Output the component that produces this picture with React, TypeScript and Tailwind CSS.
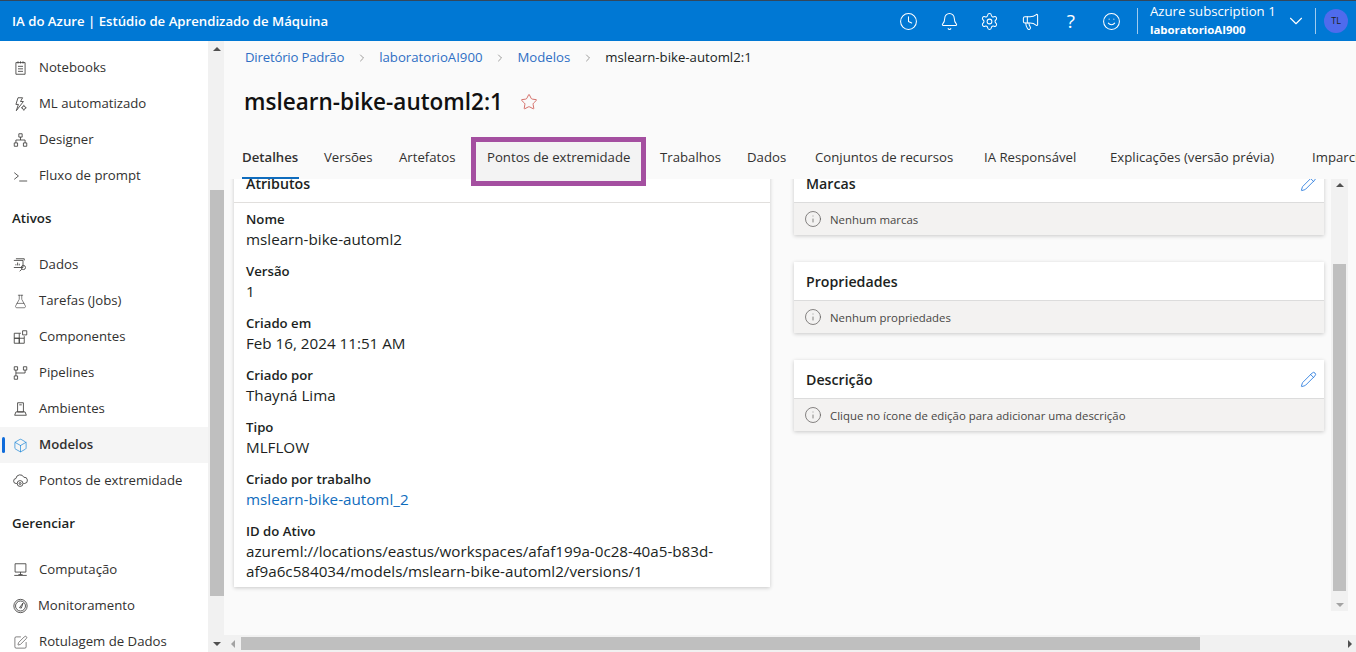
import { Bell, Box, ChevronDown, ChevronRight, Clock, FlaskConical, Info, Megaphone, Pencil, Settings, Smile, SquarePen, Star } from "lucide-react";
import type { ReactNode } from "react";

const stroke = { fill: "none", stroke: "#3b3a39", strokeWidth: 1 };

function NotebookIcon() {
  return (
    <svg width="18" height="18" viewBox="0 0 18 18" {...stroke}>
      <path d="M3.5 2.5h11v14h-11zM6 1v2.5M9 1v2.5M12 1v2.5M6 7h6M6 10h6M6 13h6" />
    </svg>
  );
}

function AutomlIcon() {
  return (
    <svg width="18" height="18" viewBox="0 0 18 18" {...stroke}>
      <path d="M6 1.5h5.5L9 6h3.5L4 17l2.5-7.5H3.5zM13 10v1.2M13 15.8V17M9.8 13.5H11M15 13.5h1.2" />
      <circle cx="13" cy="13.5" r="2" />
    </svg>
  );
}

function DesignerIcon() {
  return (
    <svg width="18" height="18" viewBox="0 0 18 18" {...stroke}>
      <path d="M7 1.5h4v4H7zM1.5 12.5h4v4h-4zM12.5 12.5h4v4h-4zM9 5.5V9M3.5 12.5V9h11v3.5" />
    </svg>
  );
}

function PromptIcon() {
  return (
    <svg width="18" height="18" viewBox="0 0 18 18" {...stroke}>
      <path d="M1.5 5l5 4-5 4M7.5 15H17" />
    </svg>
  );
}

function DataIcon() {
  return (
    <svg width="18" height="18" viewBox="0 0 18 18" {...stroke}>
      <path d="M3.5 1.5h10v2M1 3.5h11v8.5H1M3.5 9.5V8M5.5 9.5V6M7.5 9.5V7.5" />
      <circle cx="12.5" cy="12" r="2.5" />
      <path d="M10.7 14L8 16.5" />
    </svg>
  );
}

function ComponentIcon() {
  return (
    <svg width="18" height="18" viewBox="0 0 18 18" {...stroke}>
      <path d="M1.5 4.5h6v6h-6zM7.5 10.5h6v6h-6zM1.5 10.5h6v6h-6zM7.5 4.5h2M13.5 8v2.5M11.5 1.5h5v5h-5z" />
    </svg>
  );
}

function PipelineIcon() {
  return (
    <svg width="18" height="18" viewBox="0 0 18 18" {...stroke}>
      <path d="M1.5 1.5h4v4h-4zM12.5 1.5h4v4h-4zM1.5 12.5h4v4h-4zM3.5 5.5v7M3.5 9h11V5.5" />
    </svg>
  );
}

function EnvIcon() {
  return (
    <svg width="18" height="18" viewBox="0 0 18 18" {...stroke}>
      <path d="M5.5 1.5h7v11h-7zM7.5 4h3M3.5 12.5h11l1.5 4H2z" />
    </svg>
  );
}

function EndpointIcon() {
  return (
    <svg width="18" height="18" viewBox="0 0 18 18" {...stroke}>
      <path d="M5 12H4a3 3 0 0 1-.5-6A5 5 0 0 1 13 4.5 3.7 3.7 0 0 1 14 12h-1.5" />
      <circle cx="8.5" cy="12" r="3.5" />
      <circle cx="8.5" cy="12" r="1.2" />
    </svg>
  );
}

function ComputeIcon() {
  return (
    <svg width="18" height="18" viewBox="0 0 18 18" {...stroke}>
      <path d="M2.5 1.5h13v10h-13zM9 11.5v3M1.5 15.5h15M6.5 14.5h5" />
    </svg>
  );
}

function MonitorIcon() {
  return (
    <svg width="18" height="18" viewBox="0 0 18 18" {...stroke}>
      <circle cx="9" cy="9" r="8" />
      <circle cx="9" cy="9" r="6" />
      <path d="M7.8 11L12 5.5 10 11.5z" />
    </svg>
  );
}

type NavEntry = { label: string; icon: ReactNode; active?: boolean; tight?: boolean };

const lucideProps = { size: 19, strokeWidth: 1, color: "#3b3a39" };

const groupOne: NavEntry[] = [
  { label: "Notebooks", icon: <NotebookIcon /> },
  { label: "ML automatizado", icon: <AutomlIcon /> },
  { label: "Designer", icon: <DesignerIcon /> },
  { label: "Fluxo de prompt", icon: <PromptIcon /> },
];

const groupTwo: NavEntry[] = [
  { label: "Dados", icon: <DataIcon /> },
  { label: "Tarefas (Jobs)", icon: <FlaskConical {...lucideProps} /> },
  { label: "Componentes", icon: <ComponentIcon /> },
  { label: "Pipelines", icon: <PipelineIcon /> },
  { label: "Ambientes", icon: <EnvIcon /> },
  { label: "Modelos", icon: <Box size={19} strokeWidth={1} color="#0078d4" />, active: true },
  { label: "Pontos de extremidade", icon: <EndpointIcon /> },
];

const groupThree: NavEntry[] = [
  { label: "Computação", icon: <ComputeIcon /> },
  { label: "Monitoramento", icon: <MonitorIcon />, tight: true },
  { label: "Rotulagem de Dados", icon: <SquarePen {...lucideProps} /> },
];

function NavItem({ entry }: { entry: NavEntry }) {
  return (
    <div className={`relative flex h-9 shrink-0 items-center gap-[11px] pl-[13px] text-[13.2px] text-[#323130] ${entry.active ? "bg-[#f5f5f5] font-semibold" : ""}`}>
      {entry.active && <span className="absolute left-[2px] top-[10px] h-4 w-[3px] rounded-sm bg-[#0f6cdb]" />}
      <span className="flex w-[15px] shrink-0 justify-center">{entry.icon}</span>
      <span className={entry.tight ? "-ml-px" : ""}>{entry.label}</span>
    </div>
  );
}

function NavHeading({ children }: { children: string }) {
  return <div className="h-[53px] shrink-0 pl-3 pt-[14px] text-[13.3px] font-semibold leading-5 text-[#201f1e]">{children}</div>;
}

function ScrollArrow({ dir, dim }: { dir: "up" | "down" | "left" | "right"; dim?: boolean }) {
  const cls = {
    up: "border-x-[4px] border-b-[4px] border-x-transparent border-b-[#505050]",
    down: dim
      ? "border-x-[4px] border-t-[4px] border-x-transparent border-t-[#a3a3a3]"
      : "border-x-[4px] border-t-[4px] border-x-transparent border-t-[#505050]",
    left: "border-y-[4px] border-r-[4px] border-y-transparent border-r-[#a3a3a3]",
    right: "border-y-[4px] border-l-[4px] border-y-transparent border-l-[#505050]",
  }[dir];
  return <span className={`block h-0 w-0 ${cls}`} />;
}

const tabs = [
  { label: "Detalhes", w: "w-[82px]", active: true },
  { label: "Versões", w: "w-[75px]" },
  { label: "Artefatos", w: "w-[88px]" },
  { label: "Pontos de extremidade", w: "w-[173px]", boxed: true },
  { label: "Trabalhos", w: "w-[87px]" },
  { label: "Dados", w: "w-[68px]" },
  { label: "Conjuntos de recursos", w: "w-[169px]" },
  { label: "IA Responsável", w: "w-[126px]" },
  { label: "Explicações (versão prévia)", w: "w-[202px]" },
  { label: "Imparcialidade", w: "w-[100px]" },
];

const attributes = [
  { label: "Nome", value: "mslearn-bike-automl2" },
  { label: "Versão", value: "1" },
  { label: "Criado em", value: "Feb 16, 2024 11:51 AM" },
  { label: "Criado por", value: "Thayná Lima" },
  { label: "Tipo", value: "MLFLOW" },
  { label: "Criado por trabalho", value: "mslearn-bike-automl_2", link: true },
];

function Crumb({ children, tight }: { children: string; tight?: boolean }) {
  return (
    <>
      <span className={tight ? "tracking-[-0.2px]" : ""}>{children}</span>
      <ChevronRight className="mx-[11.5px]" size={12} strokeWidth={1.2} color="#605e5c" />
    </>
  );
}

function SideCard({ title, note, edit, className }: { title: string; note: string; edit?: boolean; className?: string }) {
  return (
    <section className={`bg-white shadow-[0_1px_4px_rgba(0,0,0,0.2)] ${className ?? ""}`}>
      <div className="flex h-[38px] items-center justify-between pl-3 pr-[7px] pt-px text-[14.2px] font-semibold text-[#201f1e]">
        <span>{title}</span>
        {edit && <Pencil size={17} strokeWidth={1.1} color="#0f6cdb" />}
      </div>
      <div className="flex h-[33px] items-center gap-2 border-t border-[#dcdcdc] bg-[#f3f2f1] pl-[10px] text-[11.4px] text-[#484644]">
        <Info size={18} strokeWidth={1} color="#605e5c" />
        <span className="pt-px">{note}</span>
      </div>
    </section>
  );
}

export default function App() {
  return (
    <div className="flex h-[652px] w-[1356px] flex-col overflow-hidden bg-[#fafafa] font-['Open_Sans',sans-serif]">
      <header className="flex h-[41px] shrink-0 items-center border-t border-[#33475b] bg-[#0078d4] text-white">
        <div className="pl-3 pt-px text-[13.2px] font-semibold">IA do Azure | Estúdio de Aprendizado de Máquina</div>
        <div className="ml-auto flex items-center">
          <div className="flex items-center gap-[21.6px] pr-[16px]">
            <Clock size={19} strokeWidth={1.3} />
            <Bell size={19} strokeWidth={1.3} />
            <Settings size={19} strokeWidth={1.3} />
            <Megaphone size={19} strokeWidth={1.3} />
            <span className="flex w-[19px] justify-center text-[19px] leading-none">?</span>
            <Smile size={19} strokeWidth={1.3} />
          </div>
          <div className="flex h-[26px] items-center border-l border-[#9fcbee] pl-3">
            <div className="flex w-[135px] flex-col">
              <span className="whitespace-nowrap text-[13.2px] leading-[18px]">Azure subscription 1</span>
              <span className="text-[11.4px] font-bold leading-[20px]">laboratorioAI900</span>
            </div>
            <ChevronDown size={22} strokeWidth={1.2} />
          </div>
          <div className="ml-[8px] mr-[8px] flex h-[26px] items-center border-l border-[#9fcbee] pl-2">
            <span className="flex h-6 w-6 items-center justify-center rounded-full bg-[#4f6bed] text-[9px] text-[#201f1e]">TL</span>
          </div>
        </div>
      </header>

      <div className="flex min-h-0 flex-1">
        <nav className="flex w-[208px] shrink-0 flex-col overflow-hidden bg-white pt-[9px]">
          {groupOne.map((entry) => <NavItem key={entry.label} entry={entry} />)}
          <NavHeading>Ativos</NavHeading>
          {groupTwo.map((entry) => <NavItem key={entry.label} entry={entry} />)}
          <NavHeading>Gerenciar</NavHeading>
          {groupThree.map((entry) => <NavItem key={entry.label} entry={entry} />)}
        </nav>

        <div className="flex w-4 shrink-0 flex-col items-center justify-between bg-[#f1f1f1] py-[6px] pl-px">
          <ScrollArrow dir="up" />
          <div className="mb-[46px] mt-[139px] w-[14px] flex-1 bg-[#bfbfbf]" />
          <ScrollArrow dir="down" />
        </div>

        <main className="flex min-w-0 flex-1 flex-col">
          <div className="flex min-h-0 flex-1 flex-col">
            <div className="flex h-[33px] shrink-0 items-center pl-[21px] text-[13.2px] text-[#2f6fc4]">
              <Crumb tight>Diretório Padrão</Crumb>
              <Crumb>laboratorioAI900</Crumb>
              <Crumb>Modelos</Crumb>
              <span className="text-[#201f1e]">mslearn-bike-automl2:1</span>
            </div>
            <div className="flex h-[56px] shrink-0 items-center pl-5">
              <h1 className="text-[22.5px] font-semibold text-[#111]">mslearn-bike-automl2:1</h1>
              <Star className="ml-[17px]" size={18} strokeWidth={1} color="#c8443c" />
            </div>
            <div className="relative z-10 flex h-[49px] shrink-0 items-end pl-[18px]">
              {tabs.map((tab) => (
                <div key={tab.label} className={`relative flex h-[40px] shrink-0 items-start pt-[6px] text-[13.2px] leading-[24px] text-[#323130] ${tab.w} ${tab.active ? "font-semibold" : ""}`}>
                  {tab.boxed && <span className="absolute left-[-16px] top-[-2px] h-[49px] w-[175px] border-[5px] border-[#a44fa0] bg-[#f3f3f3]" />}
                  <span className="relative whitespace-nowrap">{tab.label}</span>
                  {tab.active && <span className="absolute bottom-0 left-0 h-[2px] w-[57px] bg-[#0f6cbd]" />}
                </div>
              ))}
            </div>

            <div className="flex min-h-0 flex-1 overflow-hidden">
              <div className="-mt-[15px] flex min-w-0 flex-1 items-start pl-[10px]">
                <section className="w-[536px] shrink-0 bg-white pb-[6px] shadow-[0_1px_4px_rgba(0,0,0,0.2)]">
                  <div className="flex h-[39px] items-center border-b border-[#e1dfdd] pl-3 pt-px text-[14.2px] font-semibold text-[#201f1e]">Atributos</div>
                  <dl className="flex flex-col gap-3 px-3 pt-[6px] text-[#201f1e]">
                    {attributes.map((item) => (
                      <div key={item.label}>
                        <dt className="text-[13.2px] font-semibold leading-5">{item.label}</dt>
                        <dd className={`text-[15.2px] leading-5 ${item.link ? "text-[#0f6cbd]" : ""}`}>{item.value}</dd>
                      </div>
                    ))}
                    <div>
                      <dt className="text-[13.2px] font-semibold leading-5">ID do Ativo</dt>
                      <dd className="text-[15.2px] leading-5">
                        azureml://locations/eastus/workspaces/afaf199a-0c28-40a5-b83d-
                        <br />
                        af9a6c584034/models/mslearn-bike-automl2/versions/1
                      </dd>
                    </div>
                  </dl>
                </section>
                <div className="ml-6 flex w-[530px] shrink-0 flex-col gap-[27px]">
                  <SideCard title="Marcas" note="Nenhum marcas" edit />
                  <SideCard title="Propriedades" note="Nenhum propriedades" />
                  <SideCard title="Descrição" note="Clique no ícone de edição para adicionar uma descrição" edit />
                </div>
              </div>
              <div className="mb-[24px] mr-2 flex w-[17px] shrink-0 flex-col items-center bg-[#f1f1f1] py-[4px]">
                <ScrollArrow dir="up" />
                <div className="mb-[12px] mt-[77px] w-[13px] flex-1 bg-[#bfbfbf]" />
                <ScrollArrow dir="down" dim />
              </div>
            </div>
          </div>
          <div className="flex h-[17px] shrink-0 items-center bg-[#f1f1f1] pl-[7px] pr-[4px]">
            <ScrollArrow dir="left" />
            <div className="ml-[6px] h-[13px] w-[959px] bg-[#bfbfbf]" />
            <div className="ml-auto"><ScrollArrow dir="right" /></div>
          </div>
        </main>
      </div>
    </div>
  );
}
